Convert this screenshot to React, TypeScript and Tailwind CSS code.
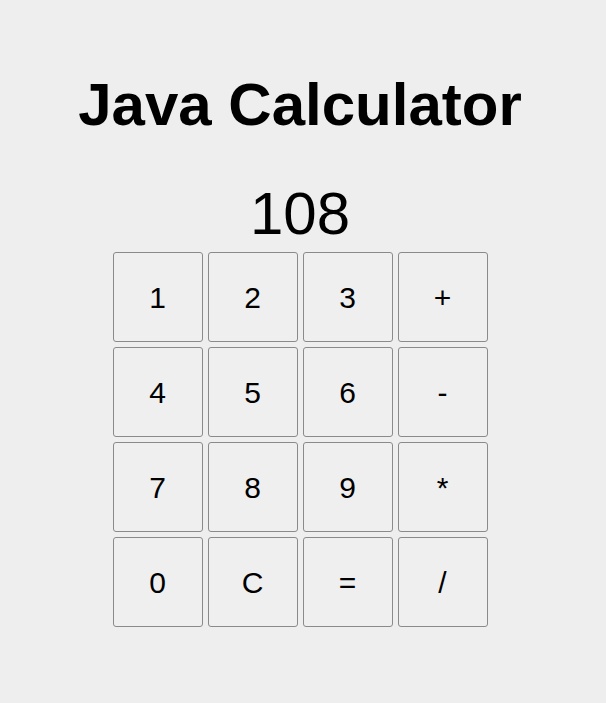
const keys = ["1", "2", "3", "+", "4", "5", "6", "-", "7", "8", "9", "*", "0", "C", "=", "/"]

export default function App() {
  return (
    <div className="min-h-[703px] w-full bg-[#eeeeee] font-['Liberation_Sans',Arial,sans-serif] text-black">
      <div className="w-[600px] flex flex-col items-center pt-[71px]">
        <h1 className="text-[60px] leading-[67px] font-bold">Java Calculator</h1>
        <div className="mt-[42px] text-[60px] leading-[67px]">108</div>
        <div className="mt-[5px] grid grid-cols-[repeat(4,90px)] auto-rows-[90px] gap-[5px]">
          {keys.map((k) => (
            <button
              key={k}
              className="flex items-center justify-center rounded-[3px] border border-[#8a8a8a] bg-[#efefef] text-[30px]"
            >
              {k}
            </button>
          ))}
        </div>
      </div>
    </div>
  )
}
